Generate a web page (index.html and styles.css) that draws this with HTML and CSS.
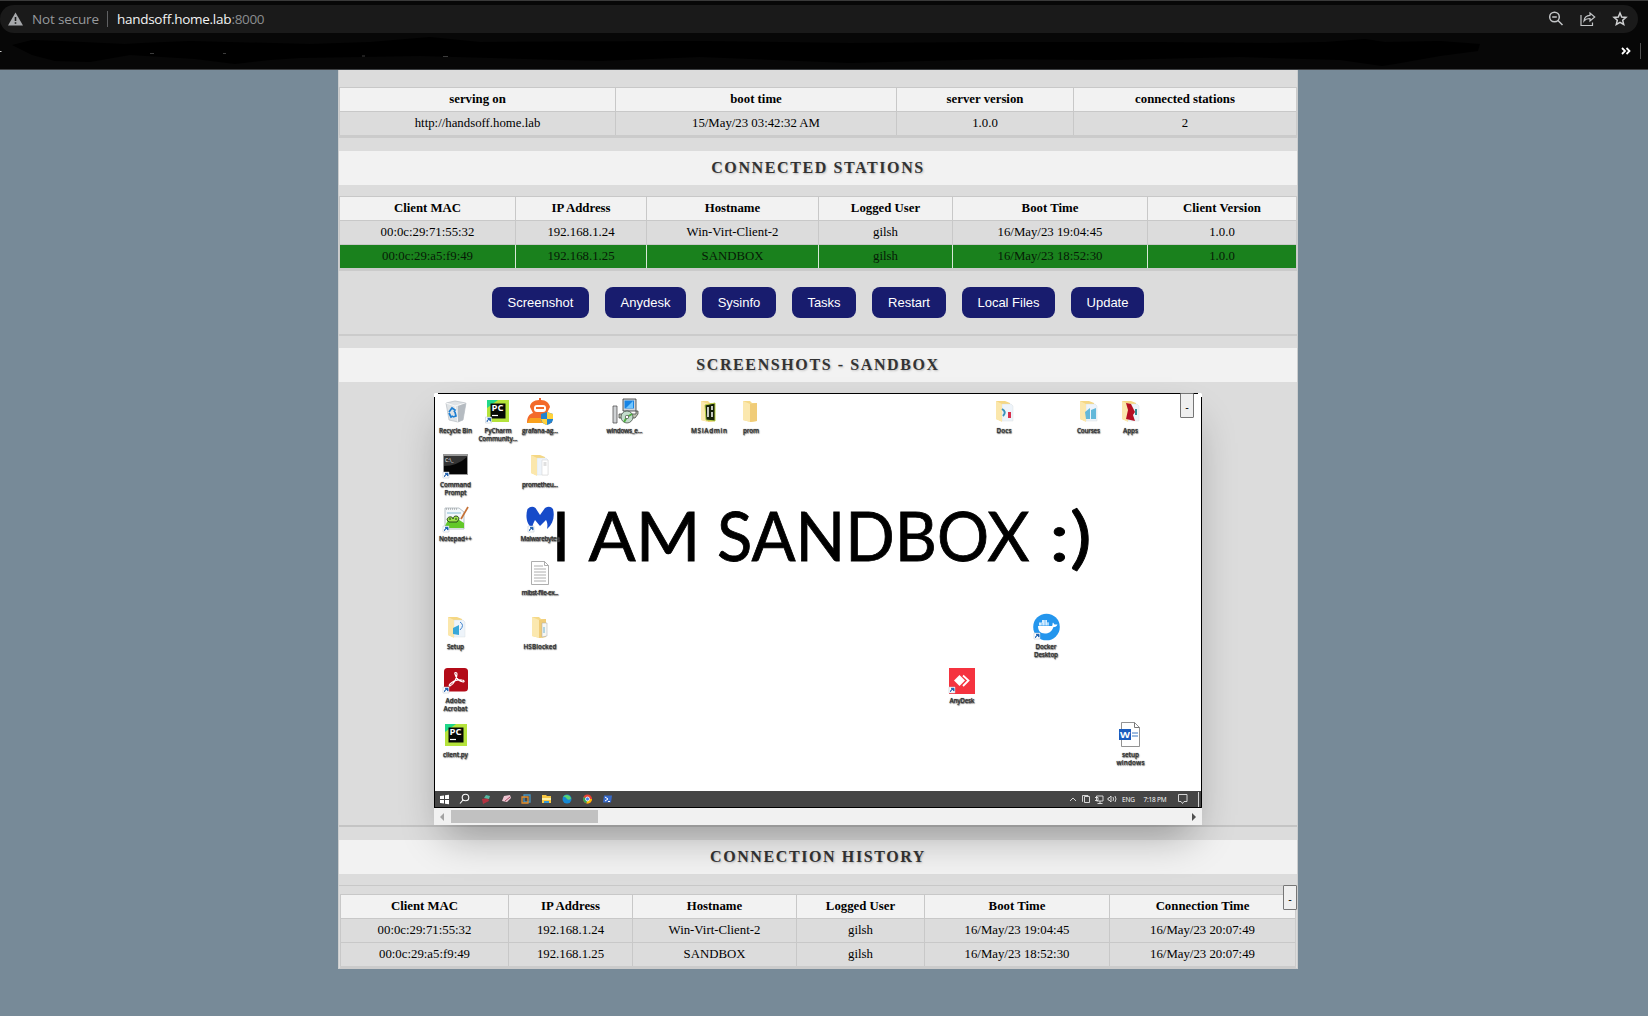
FILE: index.html
```html
<!DOCTYPE html>
<html lang="en">
<head>
<meta charset="utf-8">
<title>HandsOff</title>
<link rel="stylesheet" href="styles.css">
</head>
<body>
<header class="browser">
  <div class="address">
    <svg class="warn" width="15" height="14" viewBox="0 0 15 14"><path d="M7.5 .5 15 13.5H0z" fill="#a6a8ab"/><path d="M6.7 5h1.6v4H6.7zM6.7 10.2h1.6v1.6H6.7z" fill="#1a1a1a"/></svg>
    <svg class="url" width="240" height="28" viewBox="0 0 240 28"><text x="0" y="19" textLength="67" fill="#96999c">Not secure</text><path d="M75.5 6v16" stroke="#606163"/><text x="85" y="19" textLength="114.500" fill="#f4f4f4">handsoff.home.lab</text><text x="199.500" y="19" textLength="33" fill="#8b8d8f">:8000</text></svg>
    <div class="tools">
      <svg width="16" height="16" viewBox="0 0 16 16" fill="none" stroke="#c3c5c7" stroke-width="1.5"><circle cx="6.5" cy="6" r="4.8"/><path d="M4.2 6h4.6M10 9.5l4.5 4.5"/></svg>
      <svg width="16" height="16" viewBox="0 0 16 16" fill="none" stroke="#c3c5c7" stroke-width="1.2"><path d="M1 4v10.500h11.5v-3M4 10c.4-4 2.800-5.500 6-5.600V2l4.700 4-4.700 4V7.500C7.500 7.500 5.500 8 4 10z"/></svg>
      <svg width="16" height="16" viewBox="0 0 16 16" fill="none" stroke="#d0d1d3" stroke-width="1.5"><path d="M8 2l1.700 4 4.300.4-3.300 2.900 1 4.200L8 11.300l-3.700 2.200 1-4.200L2 6.400 6.300 6z"/></svg>
    </div>
  </div>
  <div class="bookmarks">
    <svg class="scribble" width="1490" height="36" viewBox="0 0 1490 36"><path d="M12 12L32 7 60 8 125 11 142 10 190 8 310 11 370 9 430 4 480 9 700 8 850 10 1000 9 1150 9 1270 10 1325 9 1365 6 1385 9 1440 8 1480 11 1478 18 1440 23 1395 31 1382 33 1340 27 1240 24 1110 27 1000 26 850 30 700 24 600 28 420 23 300 25 270 27 235 31 195 26 130 22 90 29 55 28 32 22z" fill="#000"/><path d="M0 18.500h1.500" stroke="#ccc"/><path d="M150 20.500h4M223 20.500h3M362 23h3M443 23.500h5" stroke="#3c3c3c"/></svg>
    <svg class="more" width="22" height="16" viewBox="0 0 22 16" fill="none"><path d="M1 5l3 3-3 3M5.500 5l3 3-3 3" stroke="#fff" stroke-width="1.800"/><path d="M19.500 0v16" stroke="#505050"/></svg>
  </div>
</header>

<main class="page">
  <table class="grid info">
    <colgroup><col class="i1"><col class="i2"><col class="i3"><col class="i4"></colgroup>
    <tr><th>serving on</th><th>boot time</th><th>server version</th><th>connected stations</th></tr>
    <tr><td>http://handsoff.home.lab</td><td>15/May/23 03:42:32 AM</td><td>1.0.0</td><td>2</td></tr>
  </table>

  <h2>CONNECTED STATIONS</h2>
  <table class="grid stations">
    <colgroup><col class="s1"><col class="s2"><col class="s3"><col class="s4"><col class="s5"><col class="s6"></colgroup>
    <tr><th>Client MAC</th><th>IP Address</th><th>Hostname</th><th>Logged User</th><th>Boot Time</th><th>Client Version</th></tr>
    <tr><td>00:0c:29:71:55:32</td><td>192.168.1.24</td><td>Win-Virt-Client-2</td><td>gilsh</td><td>16/May/23 19:04:45</td><td>1.0.0</td></tr>
    <tr class="selected"><td>00:0c:29:a5:f9:49</td><td>192.168.1.25</td><td>SANDBOX</td><td>gilsh</td><td>16/May/23 18:52:30</td><td>1.0.0</td></tr>
  </table>
  <div class="actions">
    <button class="w97">Screenshot</button><button class="w81">Anydesk</button><button class="w74">Sysinfo</button><button class="w64">Tasks</button><button class="w74">Restart</button><button class="w93">Local Files</button><button class="w73">Update</button>
  </div>

  <h2 class="shots-title">SCREENSHOTS - SANDBOX</h2>
  <section class="shots">
    <div class="viewer">
      <svg class="desktop" width="768" height="415" viewBox="434 393 768 415">
        <defs>
          <g id="link"><path d="M0 0h6v6H0z" fill="#fff" stroke="#b9c6d3" stroke-width=".5"/><path d="M1.500 5c0-2 1-2.800 2.200-2.800M2.200 1.300H5v2.800z" fill="#1c5fae" stroke="#1c5fae" stroke-width=".9"/></g>
          <g id="folder"><path d="M0 1h7l2 2h5v18l-6 1L0 20z" fill="#f5d988"/><path d="M0 1l7 3v18L0 20z" fill="#fbe8af"/><path d="M7 4l7-1v18l-7 1z" fill="#f0cc78"/></g>
          <g id="open"><path d="M0 1h9l5 2v18H5L0 19z" fill="#f5d783"/><path d="M6 4h9l2 2v15H6z" fill="#eef4fa" stroke="#d5d8dc" stroke-width=".4"/><path d="M0 1l6 3v18l-6-3z" fill="#fbe7ac"/></g>
          <g id="pc"><path d="M0 0h22v22H0z" fill="#b5e33b"/><path d="M0 8V0h11z" fill="#21d789"/><path d="M3.500 3.500h15v15h-15z" fill="#050805"/><text x="4.500" y="11" font-size="8.500" font-weight="700" textLength="12" lengthAdjust="spacingAndGlyphs" fill="#fff">PC</text><path d="M5 15.500h6" stroke="#fff" stroke-width="1.200"/></g>
        </defs>
        <path d="M434 394l1-1h766l1 1v414H434z" fill="#fff"/>
        <g class="wall"><text x="551.500" y="561">I</text><text x="588.500" y="561" textLength="112" lengthAdjust="spacingAndGlyphs">AM</text><text x="717" y="561" textLength="312.500" lengthAdjust="spacingAndGlyphs">SANDBOX</text><text x="1049" y="561" textLength="43" lengthAdjust="spacingAndGlyphs">:)</text></g>

        <g transform="translate(446 400)"><path d="M0 3l9-2 11 2-3 17-5 2-9-2z" fill="#dfe3e6" stroke="#b7bdc3" stroke-width=".7"/><path d="M0 3l9 3 11-3M9 6l3 16" fill="none" stroke="#f8f8f8"/><path d="M12 6l8-3-3 17-5 2z" fill="#b5bbc1"/><path d="M3 12l3-4 3 2-1 2M3 13l2 4 2-1M9 12l1 4-3 1" fill="none" stroke="#1e7fd2" stroke-width="1.700"/></g>
        <use href="#pc" x="487" y="400"/><use href="#link" x="485.500" y="417"/>
        <g transform="translate(527 398)"><path d="M0 25c0-6 2-9 6-10l-3-6c0-4 4-7 9-7V0h2v2c5 0 8 3 9 7l-3 6c4 1 5 4 5 10H0z" fill="#f36a2b"/><path d="M3 20h20v5H0z" fill="#f9a11d"/><rect x="7" y="7" width="12" height="7" rx="3" fill="#fff"/><path d="M9 10h8" stroke="#f36a2b" stroke-width="2"/><path d="M14 16l6-2 6 2v6c-1 3-3 4-6 5-4-1-5-3-6-5z" fill="#2384cf"/><path d="M20 14l6 2v5h-6zM14 21h6v6c-4-1-5-3-6-6z" fill="#ffd23c"/></g>
        <g transform="translate(612 398)"><path d="M1 8h4v17H1z" fill="#cfd2d4" stroke="#444" stroke-width=".7"/><path d="M7 16h17v-3h2v3l-3 4H7z" fill="#bfc5b4" stroke="#333" stroke-width=".7"/><path d="M11 1h13v12H11z" fill="#d0d5d9" stroke="#333" stroke-width=".8"/><path d="M12.500 2.500h9.500v8h-9.500z" fill="#1684e5"/><path d="M14 10l7-7v7z" fill="#70c5ff"/><circle cx="15" cy="19" r="6" fill="#c3dccb" stroke="#37403a" stroke-width=".7"/><path d="M15 19l5-3M15 19l-3 5" stroke="#4fae42" stroke-width="2"/><circle cx="15" cy="19" r="1.700" fill="#fff" stroke="#333" stroke-width=".6"/></g>
        <g transform="translate(701 400)"><use href="#folder"/><path d="M4 5l10-2v18l-9-1z" fill="#16200a" stroke="#b7cf43"/><path d="M7 7v10M11 6v4M11 12v5" stroke="#fff" stroke-width="1.500"/></g>
        <use href="#folder" x="743" y="400"/>
        <g transform="translate(996 400)"><use href="#open"/><path d="M6 9q5 3 1 7" fill="none" stroke="#3b91b9" stroke-width="2"/><path d="M12 12h3v6h-3z" fill="#d9304c"/></g>
        <g transform="translate(1080 400)"><use href="#open"/><path d="M5 12l5-4v11H6zM11 10l5-2v11h-5z" fill="#63b8da"/></g>
        <g transform="translate(1122 400)"><use href="#open"/><path d="M4 3l5 1 4 8-2 3 2 6-9-2 2-9z" fill="#b60e22"/><path d="M13 9h2v6h-2z" fill="#328a91"/></g>

        <g transform="translate(443 454)"><path d="M0 0h25v21H0z" fill="#999"/><path d="M1 2h23v18H1z" fill="#050505"/><path d="M1 12Q14 12 24 3V2H1z" fill="#343434"/><text x="2" y="8" font-size="5" fill="#fff">C:\_</text></g><use href="#link" x="443" y="472"/>
        <g transform="translate(531 454)"><use href="#open"/><path d="M11 6h6v15h-6z" fill="#fff" stroke="#ccc" stroke-width=".5"/><path d="M12.500 9h3M12.500 11h3" stroke="#999" stroke-width=".6"/></g>
        <g transform="translate(444 507)"><path d="M1 1h14l5 4v17H1z" fill="#f4f8fb" stroke="#9da9b0" stroke-width=".7"/><path d="M2 2h12" stroke="#888" stroke-dasharray="1 1"/><path d="M3 6h14" stroke="#82bad2"/><path d="M1 19l3-6 8-2 8 5v5H3z" fill="#63c829"/><path d="M3 13c0-4 6-4 6-1 0-4 6-4 6 0l-2 3H5z" fill="#9ce14b" stroke="#213b1c" stroke-width=".9"/><path d="M5 12h2M11 12h2" stroke="#213b1c"/><path d="M17 12L24 0" stroke="#c57135" stroke-width="1.700"/></g><use href="#link" x="443" y="526"/>
        <path d="M527.500 509q4-4 8-1l4.500 7 5-7q5-3 8 1c2 8 0 15-6 20 1-5 0-7-1-9l-6 6-5-6c-2 4-3 6-2 9-6-4-8-12-5.500-20z" fill="#164bc9"/><use href="#link" x="528" y="526"/>
        <g transform="translate(531 561)"><path d="M.5.500h13l4 4v19H.500z" fill="#fff" stroke="#999" stroke-width=".8"/><path d="M13.500.500v4h4M3 5h9M3 8h12M3 11h12M3 14h12M3 17h12M3 20h12" fill="none" stroke="#999" stroke-width=".8"/></g>
        <g transform="translate(448 616)"><use href="#open"/><path d="M5 12l6-3v10l-6-1z" fill="#39a8d8"/><path d="M12 6q5 3 0 8" fill="none" stroke="#4385ce"/></g>
        <g transform="translate(532 616)"><use href="#folder"/><path d="M10 7h5v13l-5 1z" fill="#f7f7f3" stroke="#aaa" stroke-width=".5"/><path d="M12 11v6" stroke="#6db2d2"/></g>
        <rect x="444" y="668" width="24" height="23.500" rx="3.500" fill="#b30b18"/><path d="M450 686c4-2 7-8 7-12 0-2-3-2-2 0 1 4 4 7 8 8 2 0 1-2-1-2-4-.5-9 1-12 4-1 1-1 2 0 2z" fill="none" stroke="#fff" stroke-width="1.200"/><use href="#link" x="443" y="687"/>
        <use href="#pc" x="445" y="724"/>

        <circle cx="1046.500" cy="627" r="13.300" fill="#2496ed"/><path d="M1038 626h14c1-1 0-2 1-3.500l1.500 2h3c-1 2.500-3 2.500-4 2.500-2 5-5 6.500-8.500 6.500-5 0-7-3-7-7.500z" fill="#fff"/><path d="M1039 622.500h10v3h-10zM1042 620h5v3h-5z" fill="#d4edff"/><path d="M1042 623v3M1045 620v6M1048 623v3" stroke="#2496ed" stroke-width=".5"/><use href="#link" x="1034" y="633"/>
        <path d="M949 668h26v26h-26z" fill="#f5333f"/><path d="M954 680.500l5.500-5.500 5.500 5.500-5.500 5.500z" fill="#fff"/><path d="M963 675.500l5.500 5-5.500 5.500" fill="none" stroke="#fff" stroke-width="1.800"/><use href="#link" x="949" y="687"/>
        <path d="M1121.500 722.500h13l5 5v19h-18z" fill="#fff" stroke="#777" stroke-width=".8"/><path d="M1134.500 722.500v5h5" fill="none" stroke="#777"/><path d="M1132 733h6M1132 736h6" stroke="#3c79c3"/><path d="M1119 729h12v11h-12z" fill="#1b5dbe"/><text x="1120" y="738" font-size="9" font-weight="700" textLength="10" lengthAdjust="spacingAndGlyphs" fill="#fff">W</text>

        <g class="labels">
          <text x="455.500" y="433" textLength="33">Recycle Bin</text><text x="498" y="433" textLength="27">PyCharm</text><text x="498" y="441" textLength="39">Community...</text><text x="540" y="433" textLength="36">grafana-ag...</text><text x="624.500" y="433" textLength="36">windows_e...</text><text x="709" y="433" textLength="36">MSIAdmin</text><text x="751" y="433" textLength="16">prom</text><text x="1004" y="433" textLength="15">Docs</text><text x="1088.500" y="433" textLength="23">Courses</text><text x="1130.500" y="433" textLength="15">Apps</text>
          <text x="455.500" y="487" textLength="31">Command</text><text x="455.500" y="495" textLength="22">Prompt</text><text x="540" y="487" textLength="36">prometheu...</text><text x="455.500" y="541" textLength="33">Notepad++</text><text x="540" y="541" textLength="39">Malwarebytes</text><text x="540" y="595" textLength="37">mibst-file-ex...</text><text x="455.500" y="649" textLength="17">Setup</text><text x="540" y="649" textLength="33">HSBlocked</text><text x="455.500" y="703" textLength="20">Adobe</text><text x="455.500" y="711" textLength="24">Acrobat</text><text x="455.500" y="757" textLength="25">client.py</text><text x="1046" y="649" textLength="21">Docker</text><text x="1046" y="657" textLength="24">Desktop</text><text x="962" y="703" textLength="25">AnyDesk</text><text x="1130.500" y="757" textLength="17">setup</text><text x="1130.500" y="765" textLength="28">windows</text>
        </g>

        <path d="M434 791h768v17H434z" fill="#454545"/>
        <path d="M440 796l4-.6v3.600h-4zM445 795.300l4-.6v4.300h-4zM440 800h4v3.600l-4-.6zM445 800h4v4.300l-4-.6z" fill="#fff"/>
        <g fill="none" stroke="#fff" stroke-width="1.100"><circle cx="465.500" cy="797.500" r="3.300"/><path d="M463 800l-3 3.500"/></g>
        <path d="M482 799l6-1 1 3-6 3z" fill="#b33240"/><path d="M486 795l4 1-1 3-5-1z" fill="#55b7a0"/><path d="M502 801l2-5 6-1 1 3-4 4z" fill="#eec6d2"/><path d="M505 801l5-4" stroke="#a94b66"/>
        <g fill="none" stroke-width="1.300"><path d="M524 795h6v7h-6z" stroke="#4595c4"/><path d="M522 797h6v6h-6z" stroke="#e18b2a"/></g>
        <path d="M542 795h4l1 1h4v7h-9z" fill="#f7c744"/><path d="M542 798h9v2h-9z" fill="#fff1a5"/><path d="M544 801h5v2h-5z" fill="#3798d4"/>
        <circle cx="567" cy="799" r="4.500" fill="#1688d3"/><path d="M563 797a4.500 4.500 0 018 1c0 2-3 2-4 1q-2-3-4-2z" fill="#5bd36e"/>
        <circle cx="587.500" cy="799" r="4.500" fill="#e94335"/><path d="M587.500 799l-4-2a4.500 4.500 0 003 6.400z" fill="#34a853"/><path d="M587.500 799h4.500a4.500 4.500 0 01-5.500 4.400z" fill="#fbbc05"/><circle cx="587.500" cy="799" r="2" fill="#4285f4" stroke="#fff" stroke-width=".8"/>
        <path d="M604 795.500h8l-1 7h-8z" fill="#3769c8"/><path d="M605 797l3 2-3 2M608 801.500h2" stroke="#fff" fill="none"/>
        <g fill="none" stroke="#e4e4e4" stroke-width=".9"><path d="M1070 801l3-3 3 3M1083 801.500h-.5v-6h5.500v1M1084.500 796.500h5v6h-5zM1096.500 796h6.500v5h-6.500zM1100 801v2.500M1097.500 803.500h5M1095 797.500h3v3h-3M1108 798h1l2-2v6l-2-2h-1zM1113 797q1 2 0 4M1115 796q2 3 0 6M1178.500 794.500h8.500v7h-3l-1.500 2-1.500-2h-2.500zM1198.500 792v15"/></g>
        <g class="tray"><text x="1128.500" y="801.500" textLength="13">ENG</text><text x="1155" y="801.500" textLength="23">7:18 PM</text></g>
        <path d="M434.500 808V397M438 393.500h760M1201.500 397V807.500H434" fill="none" stroke="#000"/>
      </svg>
      <div class="scrollbar"><span class="left"></span><span class="thumb"></span><span class="right"></span></div>
      <button class="toggle on-viewer">-</button>
    </div>
  </section>

  <h2 class="history-title">CONNECTION HISTORY</h2>
  <section class="history">
    <button class="toggle on-history">-</button>
    <table class="grid past">
      <colgroup><col class="h1"><col class="h2"><col class="h3"><col class="h4"><col class="h5"><col class="h6"></colgroup>
      <tr><th>Client MAC</th><th>IP Address</th><th>Hostname</th><th>Logged User</th><th>Boot Time</th><th>Connection Time</th></tr>
      <tr><td>00:0c:29:71:55:32</td><td>192.168.1.24</td><td>Win-Virt-Client-2</td><td>gilsh</td><td>16/May/23 19:04:45</td><td>16/May/23 20:07:49</td></tr>
      <tr><td>00:0c:29:a5:f9:49</td><td>192.168.1.25</td><td>SANDBOX</td><td>gilsh</td><td>16/May/23 18:52:30</td><td>16/May/23 20:07:49</td></tr>
    </table>
  </section>
</main>
</body>
</html>
```
FILE: styles.css
```css
* { box-sizing: border-box; }
body {
  margin: 0;
  height: 1016px;
  overflow: hidden;
  background: #778a98;
  font-family: "Liberation Serif", "Times New Roman", serif;
  font-size: 12.8px;
  color: #000;
}
svg { display: block; }

/* browser chrome */
.browser {
  height: 70px;
  padding-top: 4px;
  background: #070707;
  border-top: 1px solid #3a3a3a;
  border-bottom: 1px solid #3c3f42;
}
.address {
  display: flex;
  align-items: center;
  width: 1638px;
  height: 28px;
  padding: 0 10px 0 8px;
  background: #1a1a1a;
  border-radius: 14px;
}
.url {
  margin-left: 9px;
  font-family: "Open Sans", "Noto Sans", sans-serif;
  font-size: 13.5px;
}
.tools { display: flex; gap: 16px; margin-left: auto; }
.bookmarks { display: flex; align-items: center; height: 36px; }
.more { margin-left: 131px; }

/* page column */
.page {
  width: 960px;
  margin: 0 auto;
  position: relative;
  left: -6px;
  height: 899px;
  padding-top: 17px;
  background: #dcdcdc;
  border: 1px solid #cbcdce;
  border-top: 0;
}
h2 {
  height: 34px;
  margin: 13px 0 11px;
  font-size: 16px;
  line-height: 34px;
  letter-spacing: 1.6px;
  text-align: center;
  color: #333;
  background: #f2f2f2;
  text-shadow: 1px 1px 2px #bbb;
}
.grid {
  width: 958px;
  table-layout: fixed;
  border-collapse: separate;
  border-spacing: 0;
  border-top: 1px solid #c8c8c8;
  border-bottom: 3px solid #cbcbcb;
  border-right: 1px solid #cbcbcb;
}
.grid th, .grid td {
  height: 24px;
  padding: 0 0 2px;
  line-height: 20px;
  text-align: center;
  border-left: 1px solid #c8c8c8;
  border-bottom: 1px solid #c8c8c8;
}
.grid th { background: #f2f2f2; }
.grid tr:last-child td { height: 23px; border-bottom: 0; }
.grid .selected td { background: #1a811d; border-left-color: #d8e8d8; color: #061a06; }
.grid .selected td:first-child { border-left-color: #c8c8c8; }
.i1 { width: 276px; } .i2 { width: 281px; } .i3 { width: 177px; }
.s1 { width: 176px; } .s2 { width: 131px; } .s3 { width: 172px; } .s4 { width: 134px; } .s5 { width: 195px; }

.actions {
  display: flex;
  justify-content: center;
  gap: 16px;
  height: 65px;
  padding-top: 16px;
  border-bottom: 2px solid #cbcbcb;
}
.actions button {
  height: 31px;
  padding: 0;
  border: 0;
  border-radius: 8px;
  background: #181c6e;
  color: #fff;
  font: 13px "Liberation Sans", Arial, sans-serif;
}
.w97 { width: 97px; } .w81 { width: 81px; } .w74 { width: 74px; }
.w64 { width: 64px; } .w93 { width: 93px; } .w73 { width: 73px; }

/* screenshot viewer */
.shots-title { margin-top: 12px; }
.shots { height: 434px; border-bottom: 2px solid #c4c4c4; }
.viewer {
  position: relative;
  z-index: 1;
  width: 768px;
  height: 432px;
  margin: 0 auto;
  border-radius: 2px 2px 0 0;
  box-shadow: 0 20px 40px -10px rgba(0, 0, 0, .33);
}
.desktop { font-family: "Open Sans", sans-serif; }
.wall { font-family: Lato, sans-serif; font-size: 67.5px; stroke: #000; stroke-width: .8px; }
.labels {
  font-size: 6.4px;
  font-weight: 600;
  text-anchor: middle;
  fill: #333;
  text-shadow: 0 0 1px #555, .5px .5px 1px #666;
}
.tray { font-size: 6.5px; fill: #fff; text-anchor: middle; }
.scrollbar {
  display: flex;
  align-items: center;
  height: 17px;
  background: #f1f1f1;
}
.left { width: 4px; margin: 0 7px 0 6px; border: 4px solid transparent; border-left: 0; border-right: 4px solid #a3a3a3; }
.thumb { width: 147px; height: 13px; background: #c1c1c1; }
.right { margin: 0 6px 0 auto; border: 4px solid transparent; border-right: 0; border-left: 4px solid #505050; }
.toggle {
  position: absolute;
  z-index: 2;
  width: 14px;
  height: 25px;
  padding: 2px 0 0;
  background: #efefef;
  border: 1px solid #767676;
  border-radius: 1px;
  font: 10.67px "Liberation Sans", Arial, sans-serif;
}
.on-viewer { top: 0; right: 8px; }

/* history */
.history-title { margin-top: 13px; }
.history { position: relative; padding: 8px 1px 0; border-top: 1px solid #c8c8c8; }
.on-history { top: -1px; right: 0; }
.past { width: 956px; }
.h1 { width: 168px; } .h2 { width: 124px; } .h3 { width: 164px; } .h4 { width: 128px; } .h5 { width: 185px; }
```
